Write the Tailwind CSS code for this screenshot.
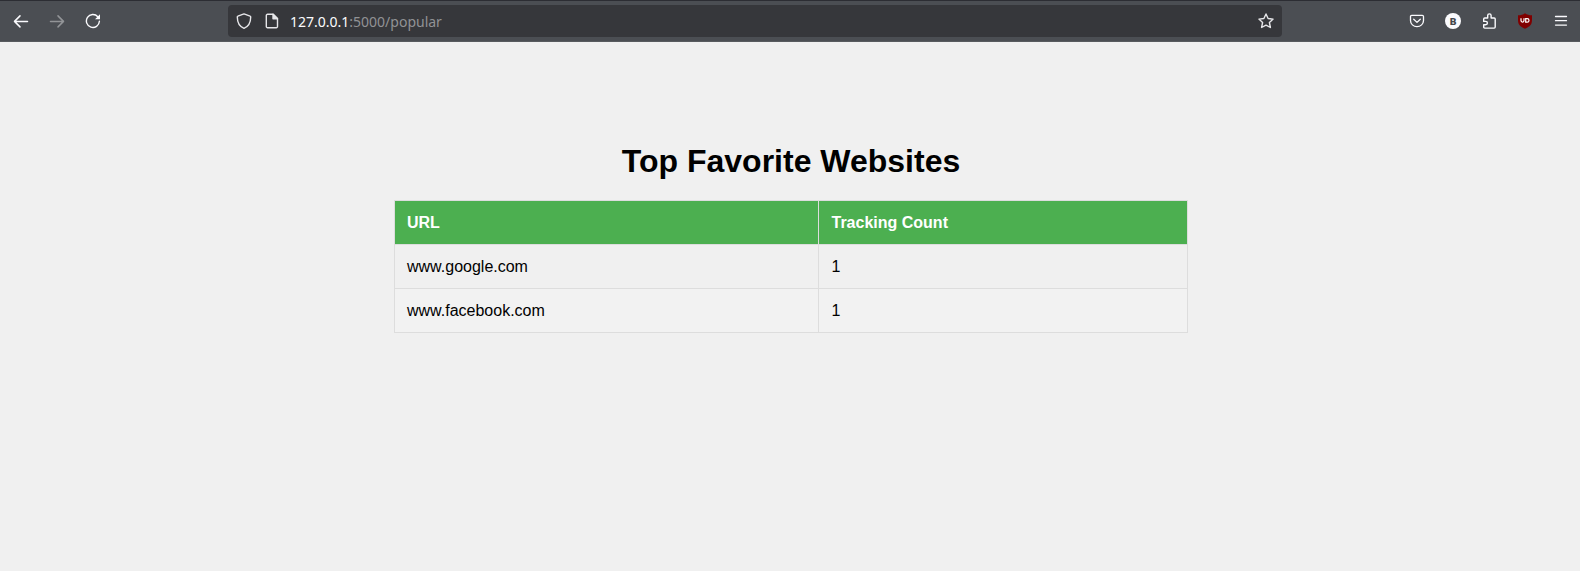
<!DOCTYPE html>
<html lang="en">
<head>
<meta charset="utf-8">
<title>Top Favorite Websites</title>
<script src="https://cdn.jsdelivr.net/npm/@tailwindcss/browser@4"></script>
</head>
<body class="h-[571px] overflow-hidden bg-[#f0f0f0] font-['Liberation_Sans',sans-serif] text-black">
<header class="flex h-[42px] items-center border-t border-b border-t-[#2c2d33] border-b-[#585b5f] bg-[#4b4e53] text-[#fbfbfe]">
  <nav class="flex w-[228px] items-center gap-5 pl-[13px]">
    <svg class="size-4" viewBox="0 0 16 16" fill="none" stroke="currentColor" stroke-width="1.5" stroke-linecap="round" stroke-linejoin="round"><path d="M14.5 8.4H1.6M7 2.9 1.5 8.4 7 13.9"/></svg>
    <svg class="size-4 text-[#929497]" viewBox="0 0 16 16" fill="none" stroke="currentColor" stroke-width="1.5" stroke-linecap="round" stroke-linejoin="round"><path d="M1.5 8.4H14.4M9 2.9l5.5 5.5L9 13.9"/></svg>
    <svg class="size-4" viewBox="0 0 16 16" fill="none" stroke="currentColor" stroke-width="1.4" stroke-linecap="round"><path d="M14.4 8.3A6.5 6.5 0 1 1 12.8 3.7"/><path d="M15 1.2v5H10z" fill="currentColor" stroke="none"/></svg>
  </nav>
  <div class="flex h-8 w-[1054px] items-center rounded bg-[#36373b] px-2">
    <svg class="size-4 text-[#e6e6e9]" viewBox="0 0 16 16" fill="none" stroke="currentColor" stroke-width="1.4" stroke-linejoin="round"><path d="M8 .9 14.1 3.2a.9.9 0 0 1 .6.8c0 4.5-1.5 9.2-6.7 11.3C2.8 13.2 1.3 8.5 1.3 4a.9.9 0 0 1 .6-.8z"/></svg>
    <svg class="ml-3 size-4 text-[#e6e6e9]" viewBox="0 0 16 16" fill="none" stroke="currentColor" stroke-width="1.4" stroke-linejoin="round"><path d="M3.5 1.3h5.7l4.3 4.3v7.9a1.2 1.2 0 0 1-1.2 1.2H3.500a1.200 1.200 0 0 1-1.200-1.200v-11a1.200 1.200 0 0 1 1.200-1.200z"/><path d="M9 1.300v4.500h4.500z" fill="currentColor"/></svg>
    <div class="ml-[10px] flex-1 pt-0.5 font-['Noto_Sans',sans-serif] text-sm leading-5 text-[#fbfbfe]">127.0.0.1<span class="text-[#919295]">:5000/popular</span></div>
    <svg class="size-4 text-[#e6e6e9]" viewBox="0 0 16 16" fill="none" stroke="currentColor" stroke-width="1.400" stroke-linejoin="round"><path d="M8 1l2.100 4.500 5 .6-3.700 3.400 1 5L8 12.100l-4.400 2.400 1-5L.9 6.100l5-.6z"/></svg>
  </div>
  <div class="ml-[127px] flex items-center gap-5">
    <svg class="size-4" viewBox="0 0 16 16" fill="none" stroke="currentColor" stroke-width="1.300" stroke-linecap="round" stroke-linejoin="round"><path d="M2.700 2.400h10.600a1.200 1.200 0 0 1 1.200 1.200v3.900a6.500 6.200 0 0 1-13 0V3.600a1.200 1.200 0 0 1 1.200-1.200z"/><path d="M4.700 6.300 8 9.400l3.300-3.100"/></svg>
    <div class="flex size-4 items-center justify-center rounded-full bg-[#fbfbfe] pt-px font-['DejaVu_Sans',sans-serif] text-[9.5px] leading-none font-bold text-[#45484d]">B</div>
    <svg class="size-4" viewBox="0 0 16 16" fill="none" stroke="currentColor" stroke-width="1.400" stroke-linejoin="round"><path d="M6.700 5V2.600a1.700 1.700 0 0 1 3.400 0V5h3.100a1 1 0 0 1 1 1v8.100a1 1 0 0 1-1 1H3.700a1 1 0 0 1-1-1v-2.300h2a1.700 1.700 0 0 0 0-3.400h-2V6a1 1 0 0 1 1-1z"/></svg>
    <svg class="size-4" viewBox="0 0 16 16"><path d="M8 .3c2 1.500 4 2 7 2v4.700c0 4.500-2 6.500-7 8.800C3 13.500 1 11.500 1 7V2.300c3 0 5-.5 7-2z" fill="#800000"/><path d="M4 5.200v2.400a1.500 1.500 0 0 0 3 0V5.200M8.700 5.600h1.500a1.800 1.800 0 0 1 0 3.600H8.700z" fill="none" stroke="#fff" stroke-width="1.200"/></svg>
    <svg class="size-4" viewBox="0 0 16 16" fill="none" stroke="currentColor" stroke-width="1.300" stroke-linecap="round"><path d="M2.500 3.500h11M2.500 7.700h11M2.500 12.100h11"/></svg>
  </div>
</header>
<main class="pt-[101px]">
  <h1 class="pl-[2px] text-center text-[32px] leading-[37px] font-bold">Top Favorite Websites</h1>
  <table class="mt-5 ml-[394px] w-[794px] table-fixed border-collapse text-left text-base leading-[19px] [&_td]:h-11 [&_td]:border [&_td]:border-[#ddd] [&_td]:px-3 [&_td:last-child]:pl-[12.5px] [&_th]:h-11 [&_th]:border [&_th]:border-[#ddd] [&_th]:px-3 [&_th:last-child]:pl-[12.5px]">
    <thead><tr class="bg-[#4caf50] text-white"><th class="w-[424px]">URL</th><th>Tracking Count</th></tr></thead>
    <tbody>
      <tr><td>www.google.com</td><td>1</td></tr>
      <tr class="bg-[#f2f2f2]"><td>www.facebook.com</td><td>1</td></tr>
    </tbody>
  </table>
</main>
</body>
</html>
